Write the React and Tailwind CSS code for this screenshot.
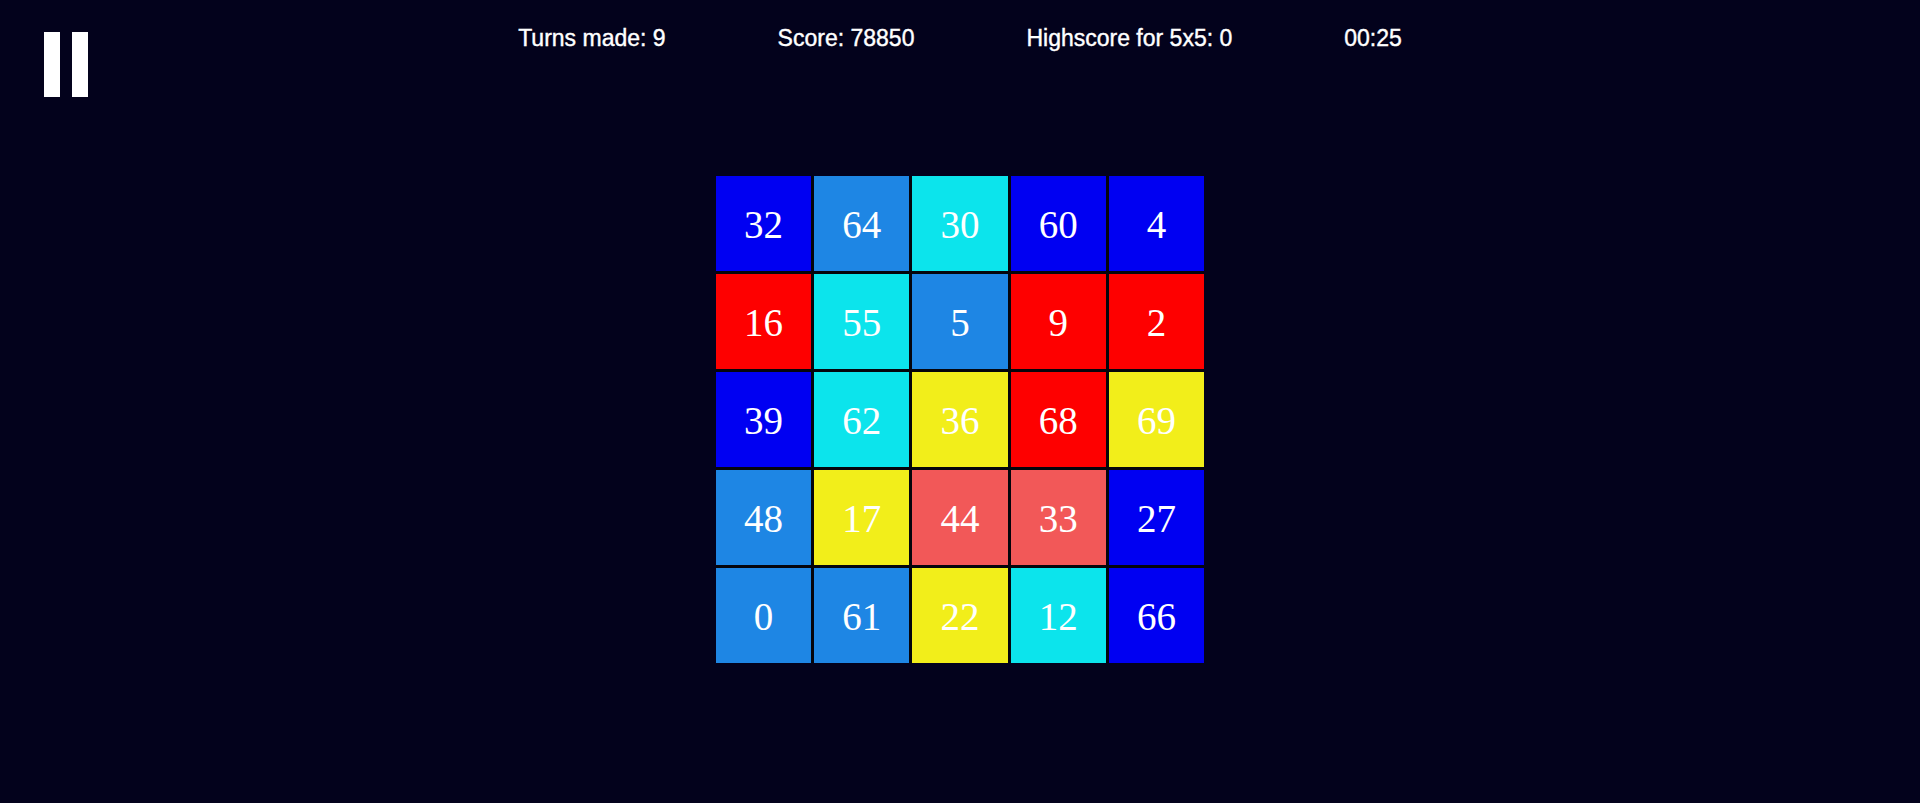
import React from 'react';

const COLORS = {
  blue: 'bg-[#0000f2]',
  sky: 'bg-[#1e86e4]',
  cyan: 'bg-[#0ce4ec]',
  red: 'bg-[#fe0000]',
  yellow: 'bg-[#f2ee1a]',
  coral: 'bg-[#f25858]',
};

const board = [
  [[32, 'blue'], [64, 'sky'], [30, 'cyan'], [60, 'blue'], [4, 'blue']],
  [[16, 'red'], [55, 'cyan'], [5, 'sky'], [9, 'red'], [2, 'red']],
  [[39, 'blue'], [62, 'cyan'], [36, 'yellow'], [68, 'red'], [69, 'yellow']],
  [[48, 'sky'], [17, 'yellow'], [44, 'coral'], [33, 'coral'], [27, 'blue']],
  [[0, 'sky'], [61, 'sky'], [22, 'yellow'], [12, 'cyan'], [66, 'blue']],
];

const App = () => {
  const stats = ['Turns made: 9', 'Score: 78850', 'Highscore for 5x5: 0', '00:25'];

  return (
    <div className="min-h-screen w-full bg-[#03021c] text-white">
      {/* Header */}
      <div className="relative h-[76px] flex items-center justify-center">
        <button className="absolute left-[44px] top-[32px] flex gap-[12px]" aria-label="Pause">
          <span className="block w-[16px] h-[65px] bg-white" />
          <span className="block w-[16px] h-[65px] bg-white" />
        </button>
        <div
          className="flex items-center gap-[112px] text-[23px] leading-none [-webkit-text-stroke:0.4px_white]"
          style={{ fontFamily: '"Liberation Sans", Arial, sans-serif' }}
        >
          {stats.map((s) => (
            <span key={s}>{s}</span>
          ))}
        </div>
      </div>

      {/* Board */}
      <div className="flex justify-center mt-[100px]">
        <div className="grid grid-cols-5 gap-[3px] w-[488px] bg-[#05050c]">
          {board.flat().map(([n, c], i) => (
            <div
              key={i}
              className={`${COLORS[c]} h-[95px] pt-[4px] flex items-center justify-center text-[39px] text-white`}
              style={{ fontFamily: '"Liberation Serif", "Times New Roman", serif' }}
            >
              {n}
            </div>
          ))}
        </div>
      </div>
    </div>
  );
};

export default App;
